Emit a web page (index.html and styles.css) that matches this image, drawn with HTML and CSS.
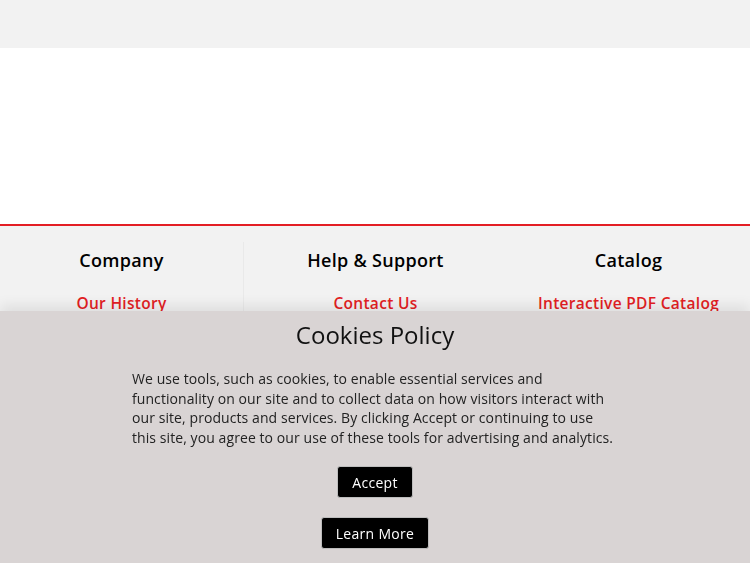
FILE: index.html
```html
<!DOCTYPE html>
<html lang="en">
<head>
<meta charset="utf-8">
<title>Footer</title>
<link rel="stylesheet" href="styles.css">
</head>
<body>
<header class="topbar"></header>
<main class="content"></main>
<footer class="footer">
  <div class="col">
    <h3 class="col-title">Company</h3>
    <a class="col-link" href="#">Our History</a>
  </div>
  <div class="col col-mid">
    <h3 class="col-title">Help &amp; Support</h3>
    <a class="col-link" href="#">Contact Us</a>
  </div>
  <div class="col">
    <h3 class="col-title">Catalog</h3>
    <a class="col-link" href="#">Interactive PDF Catalog</a>
  </div>
</footer>
<div class="cookie">
  <h2 class="cookie-title">Cookies Policy</h2>
  <p class="cookie-text">We use tools, such as cookies, to enable essential services and functionality on our site and to collect data on how visitors interact with our site, products and services. By clicking Accept or continuing to use this site, you agree to our use of these tools for advertising and analytics.</p>
  <div class="cookie-actions">
    <button class="btn">Accept</button>
    <button class="btn">Learn More</button>
  </div>
</div>
</body>
</html>
```
FILE: styles.css
```css
* { box-sizing: border-box; }
html, body { margin: 0; padding: 0; }
body {
  font-family: "Open Sans", "Noto Sans", sans-serif;
  background: #fff;
  color: #000;
  height: 563px;
  overflow: hidden;
}
.topbar { height: 48px; background: #f2f2f2; }
.content { height: 176px; background: #fff; }
.footer {
  border-top: 2px solid #e31e24;
  background: #f2f2f2;
  display: grid;
  grid-template-columns: 243px 1fr 243px;
  padding-top: 16px;
  height: 337px;
}
.col { display: flex; flex-direction: column; align-items: center; }
.col-mid { border-left: 1px solid #e9e9e9; }
.col-title {
  margin: 0;
  font-size: 18px;
  font-weight: 600;
  line-height: 36px;
  letter-spacing: 0.3px;
}
.col-link {
  margin-top: 15px;
  color: #e31e24;
  text-decoration: none;
  font-size: 15.5px;
  font-weight: 600;
  line-height: 20px;
  letter-spacing: 0.3px;
}
.cookie {
  position: fixed;
  left: 0; right: 0; bottom: 0;
  height: 252px;
  background: #d9d4d4;
  box-shadow: 0 -6px 12px rgba(0,0,0,0.08);
  display: flex;
  flex-direction: column;
  align-items: center;
}
.cookie-title {
  margin: 9px 0 0;
  font-size: 24px;
  font-weight: 400;
  line-height: 30px;
  color: #111;
}
.cookie-text {
  margin: 19px 0 0;
  width: 486px;
  font-size: 14px;
  line-height: 19.6px;
  color: #222;
  letter-spacing: 0.08px;
}
.cookie-actions {
  margin-top: 19px;
  display: flex;
  flex-direction: column;
  align-items: center;
  gap: 19px;
}
.btn {
  font-family: inherit;
  background: #000;
  color: #fff;
  border: 1px solid #bdbdbd;
  border-radius: 3px;
  height: 32px;
  padding: 0 14px;
  font-size: 14px;
  letter-spacing: 0.3px;
}
```
